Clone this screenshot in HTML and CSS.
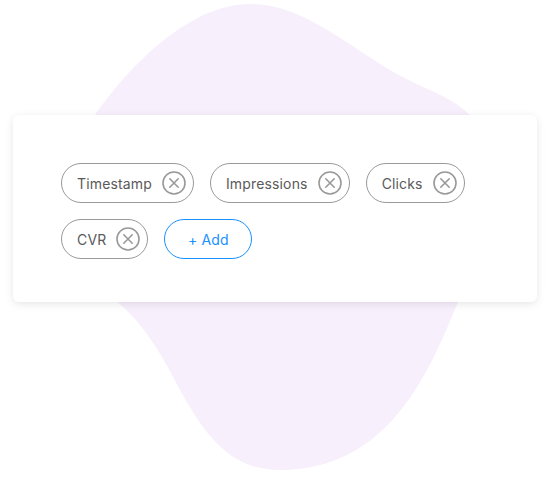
FILE: index.html
```html
<!DOCTYPE html>
<html>
<head>
<meta charset="utf-8">
<link rel="stylesheet" href="styles.css">
</head>
<body>
<svg class="blob" width="547" height="477" viewBox="0 0 547 477">
  <path d="M250 4 C300 4 340 40 390 70 C420 88 450 95 470 115 L470 302 L458 302 C430 370 390 470 280 470 C230 470 205 435 180 390 C160 350 140 320 117 302 L95 302 L95 115 C130 65 190 4 250 4 Z" fill="#f7effc"/>
</svg>
<div class="card">
  <div class="chips">
    <div class="chip"><span class="label">Timestamp</span><span class="close"><svg width="24" height="24" viewBox="0 0 24 24"><circle cx="12" cy="12" r="11" fill="none" stroke="#999" stroke-width="1.6"/><path d="M7.8 7.8 L16.2 16.2 M16.2 7.8 L7.8 16.2" stroke="#999" stroke-width="1.6" stroke-linecap="round"/></svg></span></div>
    <div class="chip"><span class="label">Impressions</span><span class="close"><svg width="24" height="24" viewBox="0 0 24 24"><circle cx="12" cy="12" r="11" fill="none" stroke="#999" stroke-width="1.6"/><path d="M7.8 7.8 L16.2 16.2 M16.2 7.8 L7.8 16.2" stroke="#999" stroke-width="1.6" stroke-linecap="round"/></svg></span></div>
    <div class="chip"><span class="label">Clicks</span><span class="close"><svg width="24" height="24" viewBox="0 0 24 24"><circle cx="12" cy="12" r="11" fill="none" stroke="#999" stroke-width="1.6"/><path d="M7.8 7.8 L16.2 16.2 M16.2 7.8 L7.8 16.2" stroke="#999" stroke-width="1.6" stroke-linecap="round"/></svg></span></div>
    <div class="chip"><span class="label">CVR</span><span class="close"><svg width="24" height="24" viewBox="0 0 24 24"><circle cx="12" cy="12" r="11" fill="none" stroke="#999" stroke-width="1.6"/><path d="M7.8 7.8 L16.2 16.2 M16.2 7.8 L7.8 16.2" stroke="#999" stroke-width="1.6" stroke-linecap="round"/></svg></span></div>
    <button class="add">+ Add</button>
  </div>
</div>
</body>
</html>
```
FILE: styles.css
```css
html, body {
  margin: 0;
  padding: 0;
  background: #fff;
  font-family: Inter, "Noto Sans", sans-serif;
}
body {
  position: relative;
  width: 547px;
  height: 477px;
  overflow: hidden;
}
.blob {
  position: absolute;
  left: 0;
  top: 0;
}
.card {
  position: relative;
  margin: 115px 0 0 13px;
  width: 524px;
  height: 187px;
  box-sizing: border-box;
  padding: 48px 48px 0 48px;
  background: #fff;
  border-radius: 6px;
  box-shadow: 0 2px 8px rgba(0, 0, 0, 0.1);
}
.chips {
  display: flex;
  flex-wrap: wrap;
  gap: 16px;
  width: 420px;
}
.chip {
  display: flex;
  align-items: center;
  height: 40px;
  box-sizing: border-box;
  border: 1px solid #999;
  border-radius: 20px;
  padding: 0 7px 0 15px;
  gap: 10px;
  color: #5a5a5a;
  font-size: 14px;
  letter-spacing: 0.15px;
}
.close {
  display: flex;
  width: 24px;
  height: 24px;
}
.add {
  height: 40px;
  width: 88px;
  box-sizing: border-box;
  border: 1px solid #1890ff;
  border-radius: 20px;
  background: #fff;
  color: #1890ff;
  font-family: Inter, "Noto Sans", sans-serif;
  font-size: 14px;
  letter-spacing: 0.15px;
  padding: 0;
}
```
